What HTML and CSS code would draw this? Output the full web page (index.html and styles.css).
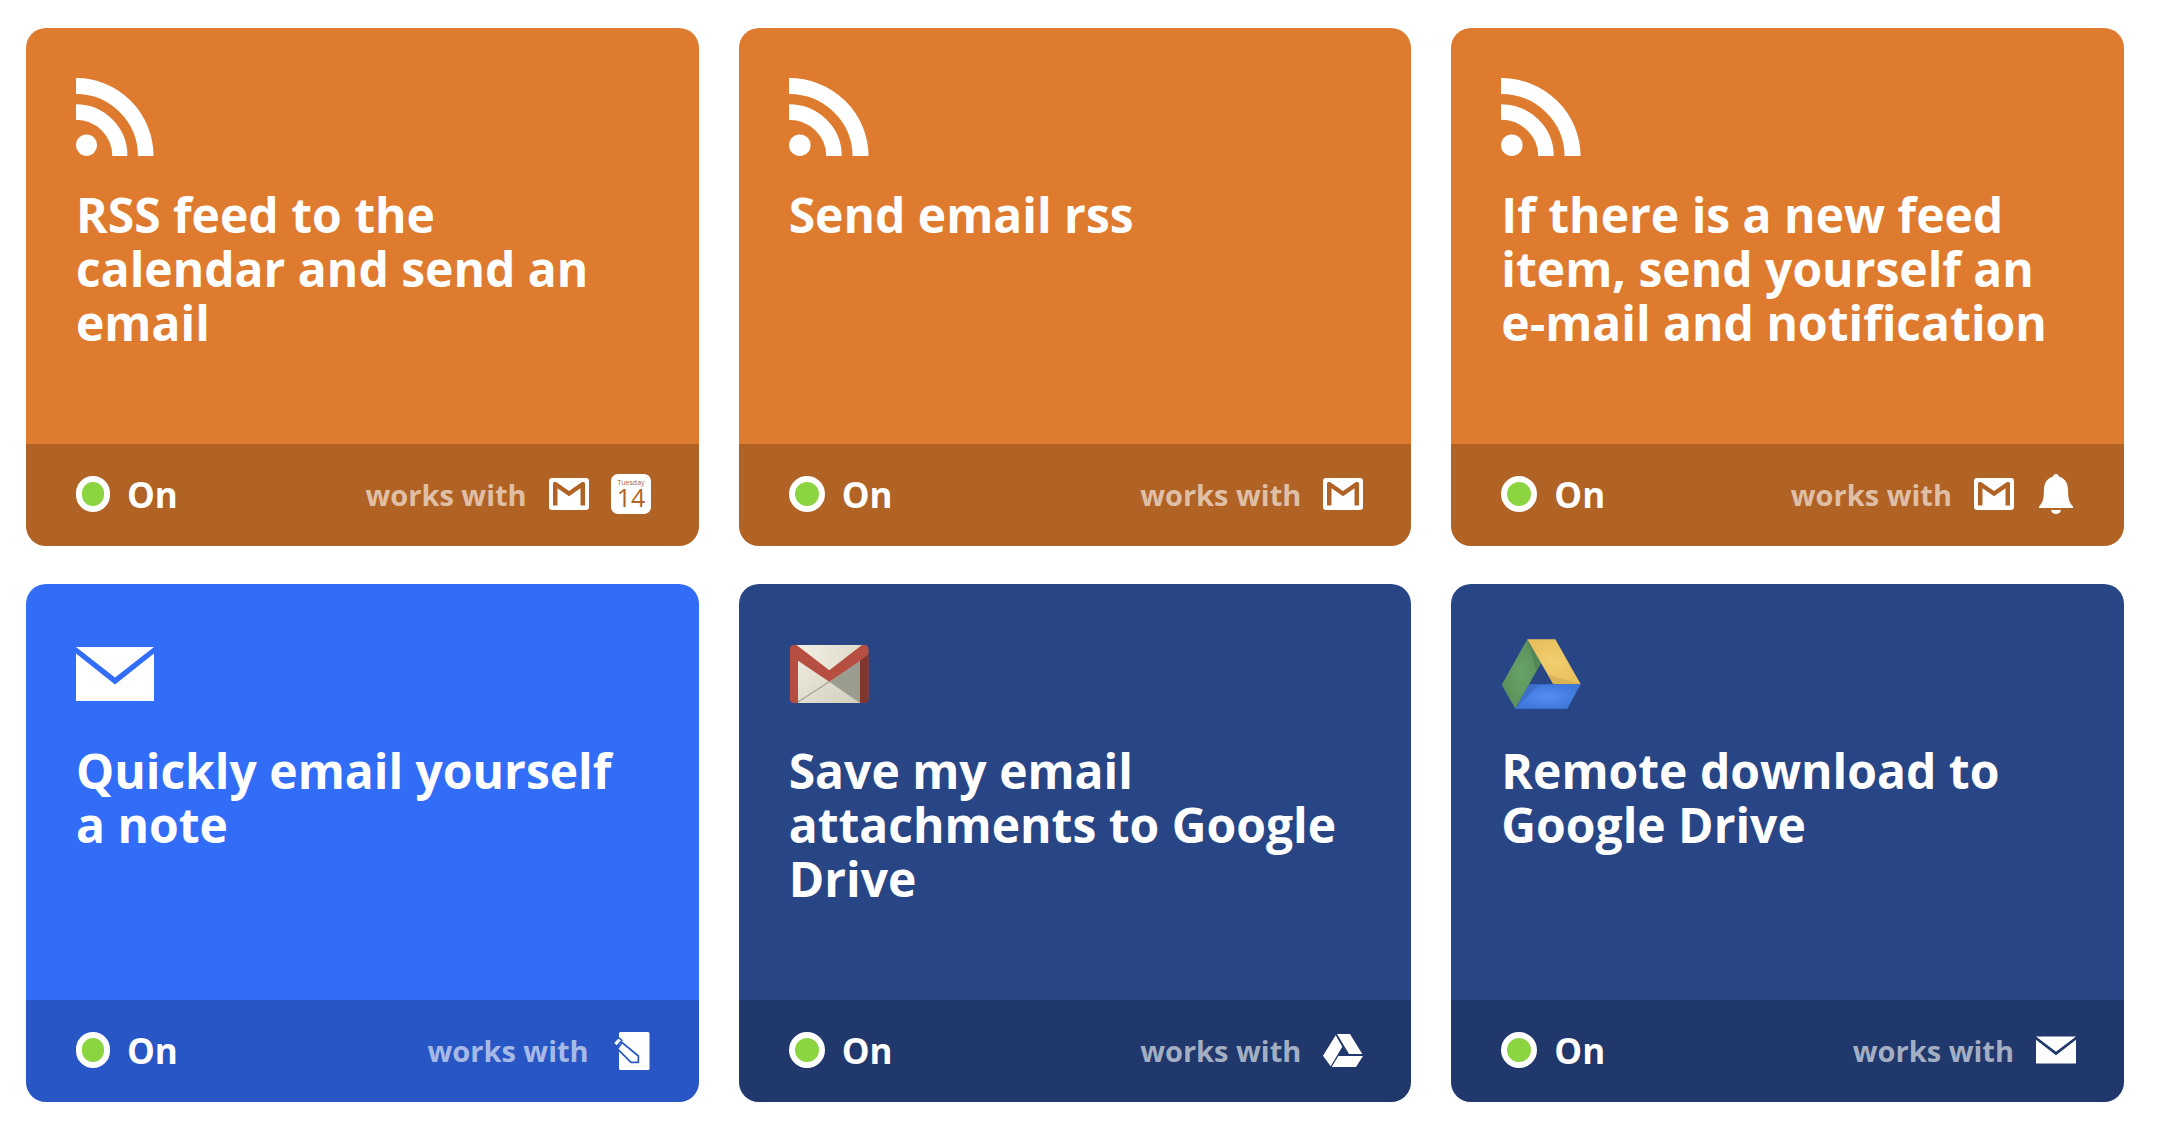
FILE: index.html
```html
<!DOCTYPE html>
<html lang="en">
<head>
<meta charset="utf-8">
<meta name="viewport" content="width=device-width, initial-scale=1">
<title>My Applets</title>
<link rel="stylesheet" href="styles.css">
</head>
<body>
<svg class="sprite" aria-hidden="true">
  <defs>
    <linearGradient id="paper" x1="0" y1="0" x2="1" y2="1">
      <stop offset="0" stop-color="#f1eee2"/>
      <stop offset="1" stop-color="#d3cfbd"/>
    </linearGradient>
    <linearGradient id="flap" x1="0" y1="0" x2="1" y2="0">
      <stop offset="0" stop-color="#f3f0e4"/>
      <stop offset="1" stop-color="#dedaca"/>
    </linearGradient>
    <radialGradient id="green"><stop offset="0" stop-color="#68a468"/><stop offset="1" stop-color="#5a915b"/></radialGradient>
    <radialGradient id="yellow"><stop offset="0" stop-color="#f2cf70"/><stop offset="1" stop-color="#e9c05d"/></radialGradient>
    <radialGradient id="blue"><stop offset="0" stop-color="#548ef2"/><stop offset="1" stop-color="#3f78da"/></radialGradient>
  </defs>
  <symbol id="rss" viewBox="0 0 80 80" preserveAspectRatio="none">
    <g fill="none" stroke="#fff">
      <path d="M0 8a71.500 70 0 0 1 71.500 70" stroke-width="16"/>
      <path d="M0 34a45 44 0 0 1 45 44" stroke-width="15.500"/>
    </g>
    <circle cx="10.800" cy="67.200" r="10.800" fill="#fff"/>
  </symbol>
  <symbol id="mail" viewBox="0 0 78 80" preserveAspectRatio="none">
    <path d="M0 13h78L39 43.500zM0 19.500l39 31 39-31V67H0z" fill="#fff"/>
  </symbol>
  <symbol id="gmail-color" viewBox="0 0 80 80">
    <path d="M7 11h66v58H7z" fill="url(#paper)"/>
    <path d="M7 11.700h66L40.300 36.500z" fill="url(#flap)"/>
    <path d="M40.300 47.700 71 26v43z" fill="#9b9c90"/>
    <path d="M9 68l31.300-20.300" stroke="#a5a294" stroke-width="1.200"/>
    <path d="M5 11h2.500l32.800 25.200L73 11h2.500a4 4 0 0 1 4 4v50a4 4 0 0 1-4 4H71V26.700L40.300 47.700 9 26.700V69H5a4 4 0 0 1-4-4V15a4 4 0 0 1 4-4z" fill="#b64f41"/>
    <path d="M71 26.700l8.500-6.500V65a4 4 0 0 1-4 4H71z" fill="#7f362d"/>
  </symbol>
  <symbol id="drive-color" viewBox="0 0 80 80">
    <path d="M26.300 5.300 40 29 14.300 74.700.700 50.700z" fill="url(#green)"/>
    <path d="M26.300 5.300 40 29l-4.500 8z" fill="#4b8152" opacity=".7"/>
    <path d="M26.300 5.300h28l25.400 45H52.300z" fill="url(#yellow)"/>
    <path d="M46.500 40.500l33.200 9.800H52.300z" fill="#cfa84e" opacity=".6"/>
    <path d="M28.300 50.300h51.400L66.300 74.700h-52z" fill="url(#blue)"/>
    <path d="M28.300 50.300h10.500L14.300 74.700z" fill="#3a6bc2" opacity=".7"/>
  </symbol>
  <symbol id="gmail" viewBox="0 0 40 40">
    <path fill-rule="evenodd" d="M3 4h34a3 3 0 0 1 3 3v26a3 3 0 0 1-3 3H3a3 3 0 0 1-3-3V7a3 3 0 0 1 3-3zM4 31.500h4.500V14.300L20 22.300l11.500-8v17.200H36V9.500Q36 8 34.500 8H33L20 17 7 8H5.500Q4 8 4 9.500z" fill="#fff"/>
  </symbol>
  <symbol id="bell" viewBox="0 0 40 40">
    <path d="M20 0c1.600 0 2.700 1 2.900 2.500C28.500 4 31.700 8.500 32 15c.3 7.500 0 12.500 5 17.500V34H3v-1.500c5-5 4.700-10 5-17.500.3-6.500 3.500-11 9.100-12.500C17.300 1 18.400 0 20 0zM15 36h10c-.5 2.600-2.500 4-5 4s-4.500-1.400-5-4z" fill="#fff"/>
  </symbol>
  <symbol id="note" viewBox="0 0 40 40">
    <rect x="8" y="2" width="30.500" height="38" rx="1.500" fill="#fff"/>
    <g fill="#fff" stroke="#2957c6" stroke-width="1.700" stroke-linejoin="round">
      <path d="M11 12.500 27.400 26v6.300H20L6.500 18.800z"/>
      <path d="M7.500 7.600 11 10.300l-5.300 6-3.500-3.200z" stroke-width="1.500"/>
    </g>
  </symbol>
  <symbol id="drive" viewBox="0 0 40 40">
    <path d="M12.700 5.300l6.600 11.400L7.700 36.300 0 25.700zM14 4h13l12.300 20H26zM15.300 26H40l-7 11H8.700z" fill="#fff"/>
  </symbol>
</svg>

<main>
  <ul class="applets">
    <li>
      <a class="card card--orange" href="#">
        <div class="card-body">
          <svg class="service service--narrow" role="img" aria-label="RSS Feed"><use href="#rss"/></svg>
          <h2 class="title">RSS feed to the calendar and send an email</h2>
        </div>
        <div class="card-footer">
          <span class="status"><span class="dot dot--narrow"></span>On</span>
          <span class="works">
            <span class="works-label">works with</span>
            <svg class="partner" role="img" aria-label="Gmail"><use href="#gmail"/></svg>
            <svg class="partner" viewBox="0 0 40 40" role="img" aria-label="Calendar">
              <rect width="40" height="40" rx="7" fill="#fff"/>
              <text class="calendar-day" x="20" y="11" text-anchor="middle">Tuesday</text>
              <text class="calendar-date" x="20" y="33" text-anchor="middle">14</text>
            </svg>
          </span>
        </div>
      </a>
    </li>
    <li>
      <a class="card card--orange" href="#">
        <div class="card-body">
          <svg class="service" role="img" aria-label="RSS Feed"><use href="#rss"/></svg>
          <h2 class="title">Send email rss</h2>
        </div>
        <div class="card-footer">
          <span class="status"><span class="dot"></span>On</span>
          <span class="works">
            <span class="works-label">works with</span>
            <svg class="partner" role="img" aria-label="Gmail"><use href="#gmail"/></svg>
          </span>
        </div>
      </a>
    </li>
    <li>
      <a class="card card--orange" href="#">
        <div class="card-body">
          <svg class="service" role="img" aria-label="RSS Feed"><use href="#rss"/></svg>
          <h2 class="title">If there is a new feed item, send yourself an e-mail and notification</h2>
        </div>
        <div class="card-footer">
          <span class="status"><span class="dot"></span>On</span>
          <span class="works">
            <span class="works-label">works with</span>
            <svg class="partner" role="img" aria-label="Gmail"><use href="#gmail"/></svg>
            <svg class="partner" role="img" aria-label="Notifications"><use href="#bell"/></svg>
          </span>
        </div>
      </a>
    </li>
    <li>
      <a class="card card--blue" href="#">
        <div class="card-body">
          <svg class="service service--narrow" role="img" aria-label="Email"><use href="#mail"/></svg>
          <h2 class="title">Quickly email yourself a note</h2>
        </div>
        <div class="card-footer">
          <span class="status"><span class="dot dot--narrow"></span>On</span>
          <span class="works">
            <span class="works-label">works with</span>
            <svg class="partner" role="img" aria-label="Note widget"><use href="#note"/></svg>
          </span>
        </div>
      </a>
    </li>
    <li>
      <a class="card card--navy" href="#">
        <div class="card-body">
          <svg class="service" role="img" aria-label="Gmail"><use href="#gmail-color"/></svg>
          <h2 class="title">Save my email attachments to Google Drive</h2>
        </div>
        <div class="card-footer">
          <span class="status"><span class="dot"></span>On</span>
          <span class="works">
            <span class="works-label">works with</span>
            <svg class="partner" role="img" aria-label="Google Drive"><use href="#drive"/></svg>
          </span>
        </div>
      </a>
    </li>
    <li>
      <a class="card card--navy" href="#">
        <div class="card-body">
          <svg class="service" role="img" aria-label="Google Drive"><use href="#drive-color"/></svg>
          <h2 class="title">Remote download to Google Drive</h2>
        </div>
        <div class="card-footer">
          <span class="status"><span class="dot"></span>On</span>
          <span class="works">
            <span class="works-label">works with</span>
            <svg class="partner" role="img" aria-label="Email"><use href="#mail"/></svg>
          </span>
        </div>
      </a>
    </li>
  </ul>
</main>
</body>
</html>
```

FILE: styles.css
```css
* {
  box-sizing: border-box;
}

body {
  margin: 0;
  background: #fff;
  font-family: "Open Sans", "Noto Sans", sans-serif;
  font-weight: 700;
}

.sprite {
  position: absolute;
  width: 0;
  height: 0;
}

.applets {
  display: grid;
  grid-template-columns: repeat(3, minmax(0, 1fr));
  gap: 38px 40px;
  margin: 0;
  padding: 28px 42px 26px 26px;
  list-style: none;
}

.card {
  display: flex;
  flex-direction: column;
  height: 100%;
  min-height: 518px;
  border-radius: 20px;
  overflow: hidden;
  color: #fff;
  text-decoration: none;
}

.card--orange {
  background: #de7b2f;
}

.card--blue {
  background: #326df7;
}

.card--navy {
  background: #284686;
}

.card-body {
  flex: 1;
  padding: 50px 60px 24px 50px;
}

.service {
  display: block;
  width: 80px;
  height: 80px;
}

.service--narrow {
  width: 78px;
}

.title {
  margin: 30px 0 0;
  font-size: 48px;
  font-weight: 700;
  line-height: 54px;
}

.card-footer {
  display: flex;
  align-items: center;
  justify-content: space-between;
  height: 102px;
  padding: 0 48px 2px 50px;
  background: rgba(0, 0, 0, 0.2);
}

.status,
.works {
  display: flex;
  align-items: center;
}

.status {
  gap: 17px;
  font-size: 35px;
}

.dot {
  width: 36px;
  height: 36px;
  border: 6px solid #fff;
  border-radius: 18px;
  background: #8bd540;
}

.dot--narrow {
  width: 34px;
}

.works {
  gap: 22px;
}

.works-label {
  font-size: 29px;
  color: rgba(255, 255, 255, 0.6);
}

.partner {
  width: 40px;
  height: 40px;
}

.calendar-day,
.calendar-date {
  fill: #b16226;
  font-weight: 400;
}

.calendar-day {
  font-size: 7px;
}

.calendar-date {
  font-size: 25px;
}
```
